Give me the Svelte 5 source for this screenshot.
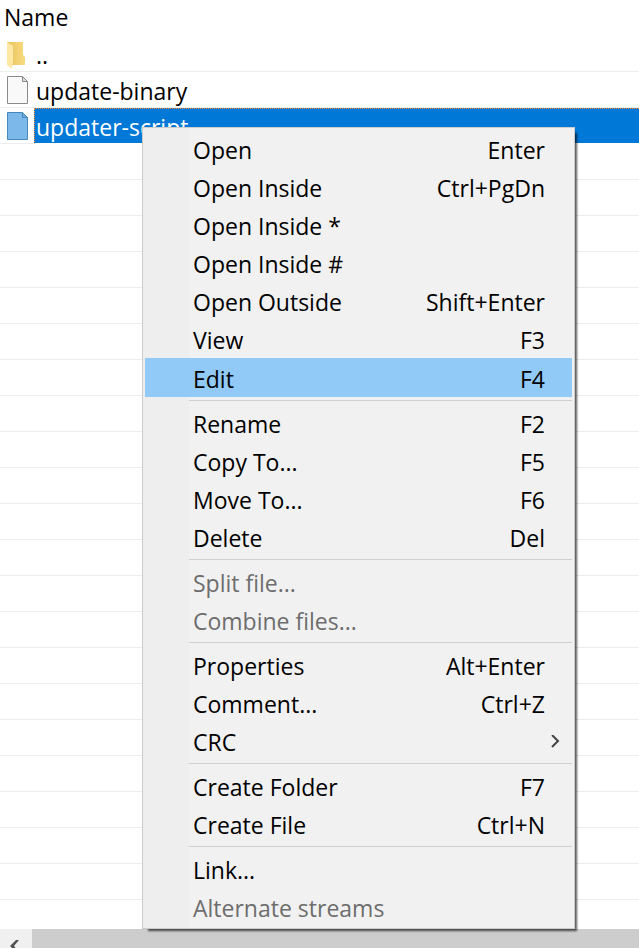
<script lang="ts">
    type Item = { label: string; keys?: string; disabled?: boolean; submenu?: boolean };

    const files: { name: string; kind: 'folder' | 'file' }[] = [
        { name: '..', kind: 'folder' },
        { name: 'update-binary', kind: 'file' },
        { name: 'updater-script', kind: 'file' }
    ];

    // Each group is divided from the next one by a separator
    const groups: Item[][] = [
        [
            { label: 'Open', keys: 'Enter' },
            { label: 'Open Inside', keys: 'Ctrl+PgDn' },
            { label: 'Open Inside *' },
            { label: 'Open Inside #' },
            { label: 'Open Outside', keys: 'Shift+Enter' },
            { label: 'View', keys: 'F3' },
            { label: 'Edit', keys: 'F4' }
        ],
        [
            { label: 'Rename', keys: 'F2' },
            { label: 'Copy To...', keys: 'F5' },
            { label: 'Move To...', keys: 'F6' },
            { label: 'Delete', keys: 'Del' }
        ],
        [
            { label: 'Split file...', disabled: true },
            { label: 'Combine files...', disabled: true }
        ],
        [
            { label: 'Properties', keys: 'Alt+Enter' },
            { label: 'Comment...', keys: 'Ctrl+Z' },
            { label: 'CRC', submenu: true }
        ],
        [
            { label: 'Create Folder', keys: 'F7' },
            { label: 'Create File', keys: 'Ctrl+N' }
        ],
        [
            { label: 'Link...' },
            { label: 'Alternate streams', disabled: true }
        ]
    ];

    let selected = $state('updater-script');
    let active = $state('Edit');
</script>

<div class="window">
    <div class="list">
        <table>
            <thead>
                <tr><th colspan="2" scope="col">Name</th></tr>
            </thead>
            <tbody>
                {#each files as file}
                    <tr class:selected={file.name === selected} onclick={() => (selected = file.name)}>
                        <td class="icon">
                            {#if file.kind === 'folder'}
                                <svg width="19" height="28" viewBox="0 0 19 28" aria-hidden="true">
                                    <defs>
                                        <linearGradient id="folder-back">
                                            <stop offset="0.2" stop-color="#ecc763" />
                                            <stop offset="1" stop-color="#fadb82" />
                                        </linearGradient>
                                    </defs>
                                    <path d="M0 2h16v13l2 2v8H0z" fill="url(#folder-back)" />
                                    <path d="M0 2l6 4v17l-1 1v5L0 25z" fill="#ffe8a3" />
                                </svg>
                            {:else}
                                <svg width="21" height="28" viewBox="0 0 21 28" aria-hidden="true">
                                    <path class="sheet" d="M.5.5h15l5 5v22H.5z" />
                                    <path class="fold" d="M15.5.5v5h5z" />
                                </svg>
                            {/if}
                        </td>
                        <td class="name">{file.name}</td>
                    </tr>
                {/each}
            </tbody>
        </table>
        <div class="empty-rows"></div>
    </div>

    <div class="scrollbar">
        <button class="scroll-left" aria-label="Scroll left">
            <svg width="10" height="14" viewBox="0 0 10 14" aria-hidden="true">
                <path d="M9 0h-3L0 6l6 6h3L4 6z" />
            </svg>
        </button>
    </div>

    <div class="menu" role="menu">
        {#each groups as group, i}
            {#if i > 0}
                <hr />
            {/if}
            {#each group as item}
                <button
                    role="menuitem"
                    class="item"
                    class:active={item.label === active}
                    disabled={item.disabled}
                    onmouseenter={() => (active = item.label)}
                >
                    <span>{item.label}</span>
                    {#if item.keys}
                        <span>{item.keys}</span>
                    {/if}
                    {#if item.submenu}
                        <svg class="arrow" width="9" height="14" viewBox="0 0 9 14" aria-hidden="true">
                            <path d="M1 0l6 6-6 6" />
                        </svg>
                    {/if}
                </button>
            {/each}
        {/each}
    </div>
</div>

<style>
    :global(body) {
        margin: 0;
        background: #fff;
    }

    .window {
        position: relative;
        display: flex;
        flex-direction: column;
        height: 100vh;
        overflow: hidden;
        font-family: 'Segoe UI', 'Open Sans', 'Noto Sans', sans-serif;
        font-size: 23px;
        line-height: 32px;
        color: #000;
    }

    .list {
        flex: 1;
        display: flex;
        flex-direction: column;
        min-height: 0;
        overflow: hidden;
    }

    table {
        width: 100%;
        border-collapse: separate;
        border-spacing: 0;
    }

    th {
        box-sizing: border-box;
        height: 36px;
        padding: 0 4px 2px;
        font-weight: normal;
        line-height: 32px;
        text-align: left;
    }

    td {
        box-sizing: border-box;
        height: 36px;
        padding: 0;
        border-bottom: 1px solid #ededed;
        line-height: 32px;
    }

    .icon {
        width: 34px;
        padding-left: 7px;
    }

    .icon svg {
        display: block;
        overflow: visible;
    }

    .name {
        padding: 3px 0 0 2px;
    }

    .selected .name {
        padding: 2px 0 0 1px;
        border-top: 1px dotted #ff8728;
        border-left: 1px dotted #ff8728;
        border-bottom-color: #fff;
        background: #0078d7;
        color: #fff;
    }

    .sheet {
        fill: #f9f9f9;
        stroke: #8a8a8a;
    }

    .fold {
        fill: #dcdcdc;
        stroke: #8a8a8a;
    }

    .selected .sheet {
        fill: #7cb8e9;
        stroke: #4488bd;
    }

    .selected .fold {
        fill: #6aaade;
        stroke: #4488bd;
    }

    .empty-rows {
        flex: 1;
        background: repeating-linear-gradient(#fff 0 35px, #ededed 35px 36px);
    }

    .scrollbar {
        flex: none;
        display: flex;
        height: 19px;
        overflow: hidden;
        background: #cdcdcd;
    }

    .scroll-left {
        width: 32px;
        height: 36px;
        padding: 0 0 0 10px;
        border: none;
        background: #f0f0f0;
    }

    .scroll-left svg {
        display: block;
        fill: #505050;
    }

    .menu {
        position: absolute;
        top: 127px;
        left: 142px;
        box-sizing: border-box;
        width: 433px;
        padding: 2px;
        border: 1px solid #ccc;
        background: linear-gradient(to right, #eee 46px, #f1f1f1 46px);
        box-shadow: 4px 4px 2px -2px rgba(0, 0, 0, 0.65);
    }

    .item {
        display: flex;
        justify-content: space-between;
        align-items: center;
        box-sizing: border-box;
        width: 100%;
        height: 38px;
        padding: 2px 27px 0 48px;
        border: none;
        background: none;
        color: #000;
        font: inherit;
        text-align: left;
    }

    .item.active {
        height: 39px;
        background: #91c9f7;
    }

    .item:disabled {
        color: #6d6d6d;
    }

    .arrow {
        margin-right: -15px;
        fill: none;
        stroke: #444;
        stroke-width: 2;
    }

    hr {
        height: 1px;
        margin: 3px 0 3px 44px;
        border: none;
        background: #d0d0d0;
    }
</style>
